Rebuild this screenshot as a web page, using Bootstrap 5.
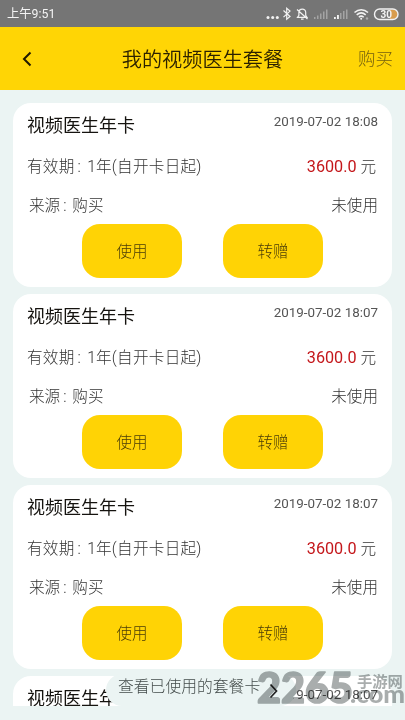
<!DOCTYPE html>
<html lang="zh-CN">
<head>
<meta charset="utf-8">
<meta name="viewport" content="width=device-width, initial-scale=1">
<title>我的视频医生套餐</title>
<link href="https://cdn.jsdelivr.net/npm/bootstrap@5.3.0/dist/css/bootstrap.min.css" rel="stylesheet">
<style>
body{font-family:Roboto,"Noto Sans CJK SC",sans-serif;background:#ebf4f3;color:#555;height:720px;overflow:hidden;line-height:1}
.status{height:27px;background:#757575;color:#f4f4f4;font-size:12.3px;padding:2px 0 0 7px}
.topbar{height:63px;background:#ffd505;color:#2b2100}
.topbar .title{font-size:20.2px;line-height:24px;font-weight:350;padding-top:2px}
.topbar .buy{font-size:17.5px;color:#75610f;line-height:24px;width:48px;padding-right:12px;font-weight:300}
.topbar .back{width:48px}
.list{height:616px;padding:13px 13px 0;gap:7px}
.plan{height:184px;border-radius:18px;padding:0 14px}
.plan .name{font-size:18px;color:#15130f;line-height:24px;padding-top:1px}
.plan .date{font-size:13.4px;line-height:18px}
.plan .line{font-size:15.6px;line-height:20px;font-weight:300;color:#333}
.row-a{height:44px;padding-top:10px}
.row-b{height:39px;padding:10px 2px 0 0}
.row-c{height:38px;padding:10px 0 0 2px}
.term{letter-spacing:.25px}
.sep{padding:0 2px 0 3px}
.price{color:#c4171b;font-size:16.2px;font-weight:400}
.act{width:100px;height:54px;border-radius:18px;background:#ffd305;color:#4a3d08;font-size:15.5px;line-height:20px;border:0;font-weight:300;padding-top:3px}
.acts{gap:41px;padding-left:55px}
.used{left:106px;top:674px;width:190px;height:32px;background:#ebf4f3;border-radius:18px;color:#444c4b;font-size:15.8px;padding:0 17px 6px 12px;font-weight:300}
.wm{left:250px;top:664px;pointer-events:none;mix-blend-mode:multiply}
</style>
<script src="https://cdn.jsdelivr.net/npm/bootstrap@5.3.0/dist/js/bootstrap.bundle.min.js"></script>
</head>
<body class="position-relative">
<div class="status d-flex align-items-center justify-content-between">
  <span>上午9:51</span>
  <svg width="145" height="25" viewBox="260 1 145 25" fill="none" stroke="#f2f2f2" stroke-width="1.2">
    <g fill="#f2f2f2" stroke="none"><circle cx="268" cy="16.5" r="1.5"/><circle cx="272.7" cy="16.5" r="1.5"/><circle cx="277.3" cy="16.5" r="1.5"/></g>
    <path transform="translate(0 -1)" d="M283.500 10.500l6.500 6-3.300 2.800v-11l3.300 2.800-6.500 6"/>
    <path transform="translate(0 -.5)" d="M297.500 16.800h9.500l-1.300-2v-3c0-2-1.500-3.200-3.400-3.200s-3.400 1.200-3.400 3.200v3zM301 18.700h2.600M297 9l10.500 9.500"/>
    <g fill="#a4a4a4" stroke="none"><path d="M314 16h1.500v2H314zM317 14.500h1.500V18H317zM320 12.500h1.500V18H320zM323 10.500h1.500V18H323zM326 8.500h1.500V18H326z"/></g>
    <path fill="#f2f2f2" stroke="none" d="M334 16h1.800v2H334zM337 14h1.900v4H337z"/>
    <path fill="#a4a4a4" stroke="none" d="M340 12h1.500v6H340zM343 10h1.500v8H343zM346 8.500h1.500V18H346z"/>
    <path stroke-width="1.500" d="M354.500 11.500c4-3.800 9.500-3.800 13.500 0M356.700 13.900c2.800-2.500 6.300-2.500 9 0M358.800 16.200c1.500-1.300 3.400-1.300 4.900 0"/><circle cx="361.200" cy="17.700" r="1" fill="#f2f2f2" stroke="none"/><circle cx="367" cy="17.500" r="1.200" fill="#aaa" stroke="none"/>
    <path fill="#d99d4d" stroke="none" d="M390 8.500h3a4.800 4.800 0 0 1 0 9.600h-3z"/>
    <rect x="374.500" y="8" width="23.500" height="10.500" rx="5.200" stroke-width="1.400"/>
    <text x="380.500" y="17" font-size="10" font-weight="700" fill="#f4f4f4" stroke="none">30</text>
  </svg>
</div>
<header class="topbar d-flex align-items-center justify-content-between">
  <div class="back"><svg class="d-block" width="48" height="24" fill="none" stroke="#211900" stroke-width="2"><path d="M30.500 5.500l-6.500 6.500 6.500 6.500"/></svg></div>
  <div class="title">我的视频医生套餐</div>
  <div class="buy text-nowrap d-flex justify-content-end">购买</div>
</header>
<main class="list d-flex flex-column overflow-hidden">
  <section class="plan bg-white flex-shrink-0">
    <div class="row-a d-flex justify-content-between"><span class="name">视频医生年卡</span><span class="date">2019-07-02 18:08</span></div>
    <div class="row-b line d-flex justify-content-between"><span class="term">有效期<span class="sep">:</span> 1年(自开卡日起)</span><span><span class="price">3600.0</span> 元</span></div>
    <div class="row-c line d-flex justify-content-between"><span>来源<span class="sep">:</span> 购买</span><span>未使用</span></div>
    <div class="acts d-flex"><button class="act">使用</button><button class="act">转赠</button></div>
  </section>
  <section class="plan bg-white flex-shrink-0">
    <div class="row-a d-flex justify-content-between"><span class="name">视频医生年卡</span><span class="date">2019-07-02 18:07</span></div>
    <div class="row-b line d-flex justify-content-between"><span class="term">有效期<span class="sep">:</span> 1年(自开卡日起)</span><span><span class="price">3600.0</span> 元</span></div>
    <div class="row-c line d-flex justify-content-between"><span>来源<span class="sep">:</span> 购买</span><span>未使用</span></div>
    <div class="acts d-flex"><button class="act">使用</button><button class="act">转赠</button></div>
  </section>
  <section class="plan bg-white flex-shrink-0">
    <div class="row-a d-flex justify-content-between"><span class="name">视频医生年卡</span><span class="date">2019-07-02 18:07</span></div>
    <div class="row-b line d-flex justify-content-between"><span class="term">有效期<span class="sep">:</span> 1年(自开卡日起)</span><span><span class="price">3600.0</span> 元</span></div>
    <div class="row-c line d-flex justify-content-between"><span>来源<span class="sep">:</span> 购买</span><span>未使用</span></div>
    <div class="acts d-flex"><button class="act">使用</button><button class="act">转赠</button></div>
  </section>
  <section class="plan bg-white flex-shrink-0">
    <div class="row-a d-flex justify-content-between"><span class="name">视频医生年卡</span><span class="date">2019-07-02 18:07</span></div>
  </section>
</main>
<div class="used position-absolute d-flex align-items-center justify-content-between text-nowrap"><span>查看已使用的套餐卡</span>
  <svg class="flex-shrink-0 mt-2" width="10" height="16" fill="none" stroke="#222" stroke-width="1.700"><path d="M1.500 1.500l6 6.500-6 6.500"/></svg>
</div>
<svg class="wm position-absolute" width="155" height="48" viewBox="250 664 155 48" fill="#a9adad" stroke="#a9adad" stroke-linejoin="round">
  <text x="257" y="702.500" font-family="Lato" font-weight="900" font-size="42" textLength="96" lengthAdjust="spacingAndGlyphs" stroke-width="1.600">2265</text>
  <text x="350" y="702.500" font-family="Lato" font-weight="900" font-size="24" textLength="55" lengthAdjust="spacingAndGlyphs" stroke="none">.com</text>
  <text x="357" y="687" font-family="Noto Sans CJK SC" font-weight="700" font-size="15.300" stroke="none">手游网</text>
</svg>
</body>
</html>
